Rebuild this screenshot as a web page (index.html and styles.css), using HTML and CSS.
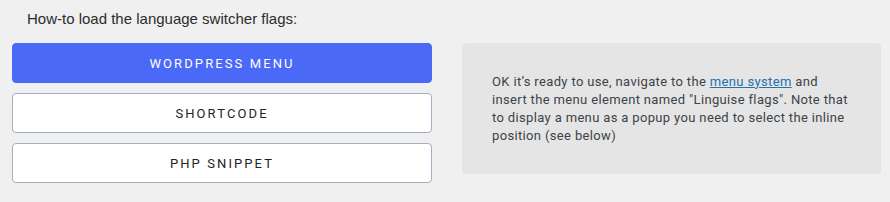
FILE: index.html
```html
<!DOCTYPE html>
<html>
<head>
<meta charset="utf-8">
<link rel="stylesheet" href="styles.css">
</head>
<body>
<div class="page">
  <h3 class="title">How-to load the language switcher flags:</h3>
  <div class="cols">
    <div class="buttons">
      <button class="btn btn-primary">WORDPRESS MENU</button>
      <button class="btn">SHORTCODE</button>
      <button class="btn">PHP SNIPPET</button>
    </div>
    <div class="panel">
      <p class="panel-text">OK it’s ready to use, navigate to the <a href="#">menu system</a> and insert the menu element named "Linguise flags". Note that to display a menu as a popup you need to select the inline position (see below)</p>
    </div>
  </div>
</div>
</body>
</html>
```
FILE: styles.css
```css
html, body {
  margin: 0;
  padding: 0;
  background: #f0f0f0;
}
.page {
  padding: 0 9px 0 12px;
  font-family: Roboto, "Liberation Sans", sans-serif;
}
.title {
  margin: 0;
  padding: 10px 0 0 15px;
  height: 43px;
  box-sizing: border-box;
  font-family: "Liberation Sans", Arial, sans-serif;
  font-weight: normal;
  font-size: 15px;
  color: #2c2c2c;
}
.cols {
  display: grid;
  grid-template-columns: 420px 419px;
  column-gap: 30px;
}
.buttons {
  display: flex;
  flex-direction: column;
  gap: 10px;
}
.btn {
  height: 40px;
  border: 1px solid #a3aebf;
  border-radius: 4px;
  background: #fff;
  color: #1d2327;
  font-family: Roboto, "Liberation Sans", sans-serif;
  font-size: 13px;
  letter-spacing: 2.1px;
  padding: 0;
  cursor: pointer;
}
.btn-primary {
  background: #4a69f7;
  border-color: #4a69f7;
  color: #fff;
}
.panel {
  background: #e5e5e5;
  border-radius: 4px;
  height: 131px;
  box-sizing: border-box;
  padding: 0 30px;
  display: flex;
  align-items: center;
}
.panel-text {
  margin: 0;
  font-size: 13px;
  line-height: 18px;
  letter-spacing: 0.35px;
  color: #3c434a;
}
.panel-text a {
  color: #2271b1;
}
```
